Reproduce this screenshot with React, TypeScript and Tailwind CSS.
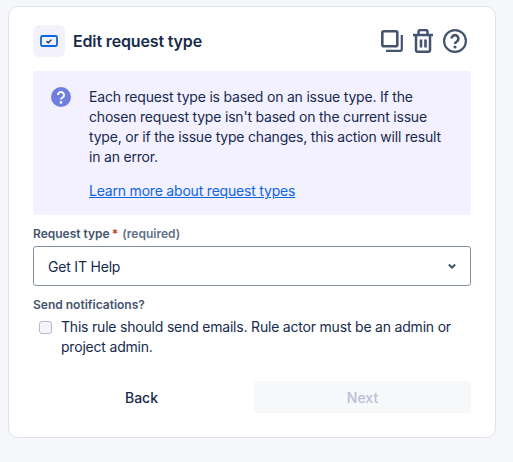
export default function App() {
  return (
    <div className="w-[513px] h-[462px] bg-[#f6f7fa] pt-[6px] pl-[8px] text-[#172b4d] overflow-hidden" style={{ fontFamily: 'Inter, sans-serif' }}>
      <div className="w-[488px] h-[432px] bg-white border border-[#dfe1ec] rounded-[10px] px-[24px] pt-[18px]">
        <div className="flex items-center h-[32px]">
          <div className="w-[32px] h-[32px] rounded-[6px] bg-[#f3f2fc] flex items-center justify-center">
            <svg width="18" height="14" viewBox="0 0 18 14" fill="none">
              <rect x="1" y="2" width="16" height="10" rx="1.5" stroke="#0c66e4" strokeWidth="1.8" />
              <path d="M6.5 7.2 8.2 8.8 11.5 5.6" stroke="#172b4d" strokeWidth="1.3" />
            </svg>
          </div>
          <div className="ml-[8px] text-[16px] leading-[20px] font-semibold tracking-[-0.15px]">Edit request type</div>
          <div className="ml-auto flex items-center gap-[10px] mr-[4px]">
            <svg width="22" height="22" viewBox="0 0 22 22" fill="none" stroke="#44546f" strokeLinejoin="round">
              <rect x="1.300" y="1.300" width="15" height="15" rx="1.500" strokeWidth="2.600" />
              <path d="M20.800 5v14.300a1.500 1.500 0 0 1-1.500 1.500H5" strokeWidth="2.200" />
            </svg>
            <svg width="20" height="24" viewBox="0 0 20 24" fill="none" stroke="#44546f" strokeWidth="2.500" strokeLinejoin="round">
              <path d="M0 6h20M5.500 5.500V3a2 2 0 0 1 2-2h5a2 2 0 0 1 2 2v2.500M3 6.500v14.800a1.500 1.500 0 0 0 1.500 1.500h11a1.500 1.500 0 0 0 1.500-1.500V6.500" />
              <path d="M8 10.500v8M12.500 10.500v8" strokeWidth="2.600" />
            </svg>
            <svg width="24" height="24" viewBox="0 0 24 24" fill="none" stroke="#44546f">
              <circle cx="12" cy="12" r="10.900" strokeWidth="2.200" />
              <path d="M8.600 9.600a3.400 3.400 0 1 1 5.200 2.900c-1.100.7-1.800 1.300-1.800 2.400" strokeWidth="2.600" />
              <circle cx="12" cy="18" r="1.600" fill="#44546f" stroke="none" />
            </svg>
          </div>
        </div>
        <div className="mt-[14px] h-[144px] bg-[#f3f0ff] rounded-[3px] flex pl-[18px] pt-[16px]">
          <svg className="shrink-0" width="20" height="20" viewBox="0 0 20 20">
            <circle cx="10" cy="10" r="10" fill="#6e7fe0" />
            <path d="M7 8a3 3 0 1 1 4.600 2.500c-1 .6-1.600 1.100-1.600 2" fill="none" stroke="#fff" strokeWidth="2" />
            <circle cx="10" cy="15.400" r="1.300" fill="#fff" />
          </svg>
          <div className="ml-[18px] w-[362px] text-[14px] leading-[20px] tracking-[-0.2px]">
            <p>Each request type is based on an issue type. If the chosen request type isn't based on the current issue type, or if the issue type changes, this action will result in an error.</p>
            <a className="block mt-[14px] text-[#0c66e4] underline">Learn more about request types</a>
          </div>
        </div>
        <div className="mt-[11px] text-[12px] leading-[16px] font-semibold text-[#44546f]">
          Request type<span className="text-[#c9372c] ml-[2px]">*</span> <span className="ml-[1px] text-[#626f86]">(required)</span>
        </div>
        <div className="mt-[4px] h-[40px] border border-[#8590a2] rounded-[3px] flex items-center pl-[14px] pr-[10px] text-[14px] tracking-[-0.2px]">
          Get IT Help
          <svg className="ml-auto" width="16" height="16" viewBox="0 0 16 16" fill="none">
            <path d="M4.800 6.600 8 9.600l3.200-3" stroke="#44546f" strokeWidth="2" />
          </svg>
        </div>
        <div className="mt-[11px] text-[12px] leading-[16px] font-semibold text-[#44546f]">Send notifications?</div>
        <div className="mt-[4px] flex items-start pl-[6px] text-[14px] leading-[20px] w-[420px] tracking-[-0.2px]">
          <div className="shrink-0 mt-[4px] w-[13px] h-[13px] rounded-[3px] border-[1.5px] border-[#b3b9d0] bg-[#f5f5f9]" />
          <div className="ml-[9px]">This rule should send emails. Rule actor must be an admin or project admin.</div>
        </div>
        <div className="mt-[24px] flex justify-between">
          <button className="w-[217px] h-[32px] text-[14px] font-medium text-[#172b4d]">Back</button>
          <button className="w-[217px] h-[32px] rounded-[3px] bg-[#f7f8f9] text-[14px] font-medium text-[#b9c0d6]">Next</button>
        </div>
      </div>
    </div>
  );
}
